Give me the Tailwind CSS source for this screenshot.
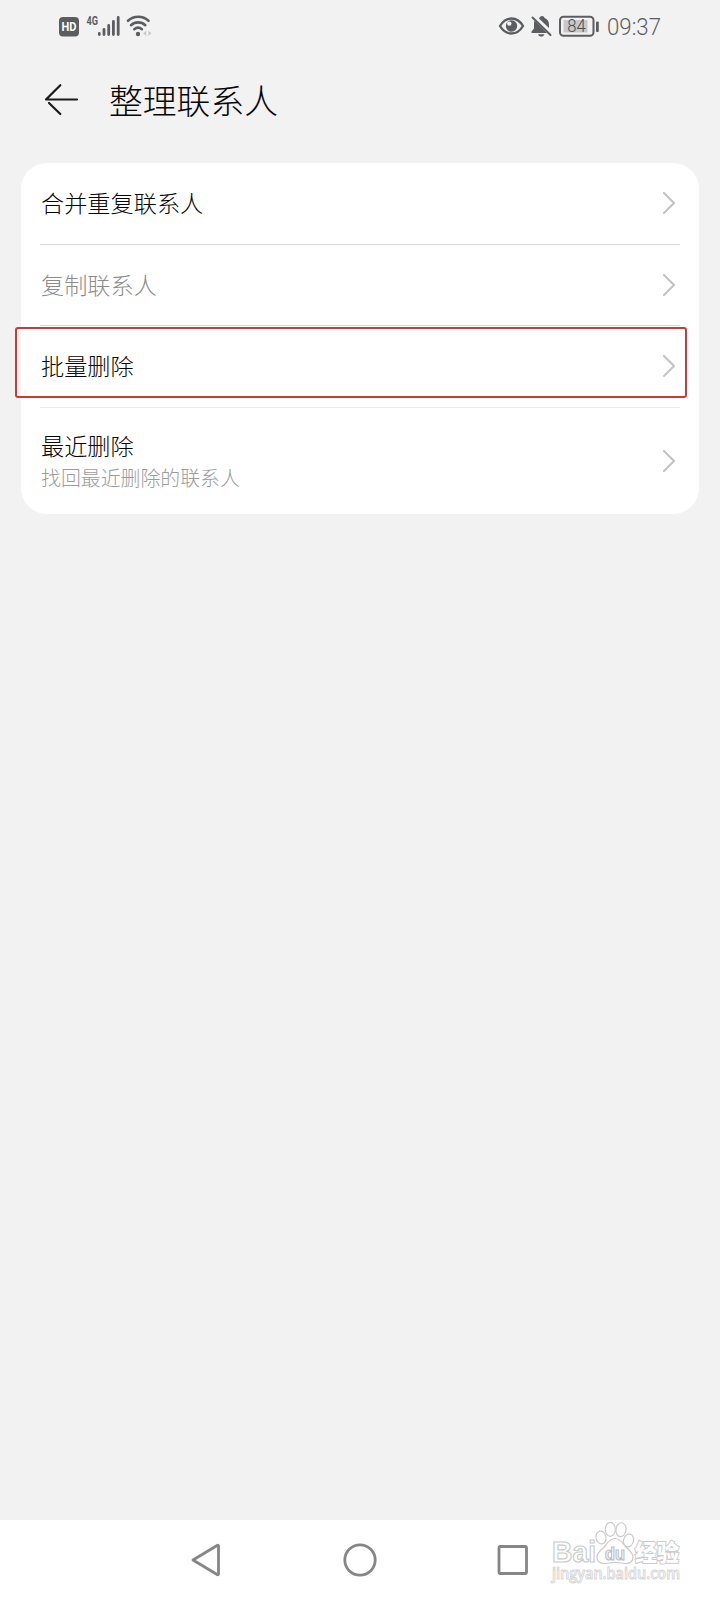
<!DOCTYPE html>
<html lang="zh-CN">
<head>
  <meta charset="UTF-8" />
  <meta name="viewport" content="width=device-width, initial-scale=1">
  <title>整理联系人</title>
  <script src="https://cdn.jsdelivr.net/npm/@tailwindcss/browser@4"></script>
</head>
<body class="bg-[#f2f2f3] font-['Noto_Sans_CJK_SC',sans-serif] font-light text-[#050505]">
  <div class="relative flex flex-col w-[720px] h-[1600px] overflow-hidden">

    <!-- status bar -->
    <header class="flex items-center justify-between h-[52px] pl-[58px] pr-[50px] text-[#5c5d60]">
      <svg width="94" height="52" viewBox="58 0 94 52" fill="none" stroke="#5c5d60">
        <rect x="59" y="17" width="20" height="19.500" rx="4" fill="#5c5d60" stroke="none" />
        <text x="69" y="31" text-anchor="middle" textLength="15" lengthAdjust="spacingAndGlyphs" font-family="Roboto, sans-serif" font-weight="700" font-size="12" fill="#fff" stroke="none">HD</text>
        <text x="86.500" y="25" textLength="11.500" lengthAdjust="spacingAndGlyphs" font-family="Roboto, sans-serif" font-weight="700" font-size="12.500" fill="#5c5d60" stroke="none">4G</text>
        <g stroke-width="2.800" stroke-linecap="round">
          <path d="M99.300 33.500v1M104 29.500v5M108.700 25.500v9M113.400 21.500v13M118.200 17.500v17" />
        </g>
        <g stroke-width="2.600" stroke-linecap="round">
          <path d="M128 20.800a15 15 0 0 1 20.500 0" />
          <path d="M131 25.200a10.500 10.500 0 0 1 14.300 0" />
          <path d="M134.300 29.200a6 6 0 0 1 7.600 0" />
        </g>
        <circle cx="138" cy="34" r="2.200" fill="#5c5d60" stroke="none" />
        <path d="M143 33.300l3.200-2.600v5.200zM151.500 33.300l-3.200-2.600v5.200z" fill="#c9c9cb" stroke="none" />
      </svg>
      <div class="flex items-center">
        <svg width="104" height="52" viewBox="497 0 104 52" fill="none" stroke="#5c5d60">
          <path d="M500 26c6-10 17-10 23 0c-6 10-17 10-23 0z" stroke-width="2.400" stroke-linejoin="round" />
          <circle cx="511.500" cy="26" r="5.700" fill="#5c5d60" stroke="none" />
          <circle cx="509.300" cy="23.600" r="2.200" fill="#f2f2f3" stroke="none" />
          <path d="M539 18.500c.6-1.600 1.700-2.500 3-2.500s2.300.9 2.600 2c2.800 1 4.400 3.400 4.400 6.500v3.500zM534.500 20.500L547 33h-15.500v-1.500l2.500-3v-4.500c0-1.300.1-2.500.5-3.500zM538 34.200h6.500c-.7 1.500-1.700 2.300-3.200 2.300s-2.700-.8-3.300-2.300z" fill="#5c5d60" stroke="none" />
          <path d="M532.500 17.500L550.500 35" stroke-width="2" stroke-linecap="round" />
          <rect x="560" y="16.700" width="33.500" height="19" rx="3.500" stroke-width="2" />
          <rect x="563.500" y="20" width="24" height="12.500" fill="#c8c8ca" stroke="none" />
          <rect x="596" y="21.500" width="2.800" height="10.500" rx="1" fill="#5c5d60" stroke="none" />
          <text x="576.500" y="32.200" text-anchor="middle" textLength="18.500" lengthAdjust="spacingAndGlyphs" font-family="Roboto, sans-serif" font-weight="300" font-size="17.500" fill="#4c4d50" stroke="none">84</text>
        </svg>
        <svg width="69" height="52" viewBox="601 0 69 52">
          <text x="607" y="35.300" textLength="54" lengthAdjust="spacingAndGlyphs" font-family="Roboto, sans-serif" font-weight="300" font-size="24" fill="#5c5d60">09:37</text>
        </svg>
      </div>
    </header>

    <!-- title -->
    <div class="flex items-center gap-[29px] h-[96px] pl-11">
      <svg class="shrink-0" width="36" height="34" viewBox="0 0 36 34" fill="none" stroke="#1a1a1a" stroke-width="2.200" stroke-linecap="round" stroke-linejoin="round">
        <path d="M33 16.500H2L16.300 2.200M5 20L16.300 31" />
      </svg>
      <h1 class="text-[33.800px] leading-[48px] whitespace-nowrap">整理联系人</h1>
    </div>

    <!-- list -->
    <main class="mt-[15px] mx-[21px] h-[351px] px-[19px] rounded-[26px] bg-white text-[23.2px]">
      <div class="flex items-center justify-between h-[82px] pl-px pr-1 pb-0.5 border-b border-[#d8d8d9]">
        <span>合并重复联系人</span>
        <svg width="14" height="24" viewBox="0 0 14 24" fill="none" stroke="#c4c4c5" stroke-width="2.200" stroke-linecap="round" stroke-linejoin="round"><path d="M2 2l10 10L2 22" /></svg>
      </div>
      <div class="flex items-center justify-between h-[81px] pl-px pr-1 pb-px border-b border-[#d8d8d9]">
        <span class="text-[#8c8c8d]">复制联系人</span>
        <svg width="14" height="24" viewBox="0 0 14 24" fill="none" stroke="#c4c4c5" stroke-width="2.200" stroke-linecap="round" stroke-linejoin="round"><path d="M2 2l10 10L2 22" /></svg>
      </div>
      <div class="flex items-center justify-between h-[82px] pl-px pr-1 pb-0.5 border-b border-[#ececed]">
        <span>批量删除</span>
        <svg width="14" height="24" viewBox="0 0 14 24" fill="none" stroke="#c4c4c5" stroke-width="2.200" stroke-linecap="round" stroke-linejoin="round"><path d="M2 2l10 10L2 22" /></svg>
      </div>
      <div class="flex items-center justify-between h-[106px] pl-px pr-1">
        <div class="pt-0.5">
          <p class="leading-8">最近删除</p>
          <p class="text-[19.900px] leading-[34px] text-[#9c9c9d]">找回最近删除的联系人</p>
        </div>
        <svg width="14" height="24" viewBox="0 0 14 24" fill="none" stroke="#c4c4c5" stroke-width="2.200" stroke-linecap="round" stroke-linejoin="round"><path d="M2 2l10 10L2 22" /></svg>
      </div>
    </main>

    <!-- highlight over the third row -->
    <div class="absolute left-[15px] top-[327px] w-[672px] h-[71px] border-2 border-[#cb3a37] rounded-[3px]"></div>

    <!-- navigation bar -->
    <nav class="mt-auto flex items-center h-20 pl-[190px] bg-white">
      <svg width="340" height="80" viewBox="190 1520 340 80" fill="none" stroke="#868686" stroke-width="2.800" stroke-linejoin="round">
        <path d="M193 1560L217.500 1545.300Q218.500 1545 218.500 1546V1574Q218.500 1575 217.500 1574.700Z" />
        <circle cx="360" cy="1560" r="15.200" />
        <rect x="499" y="1546.500" width="27.500" height="27" rx="1.500" />
      </svg>
    </nav>

    <!-- watermark -->
    <svg class="absolute left-[545px] top-[1515px] overflow-visible" width="145" height="75" viewBox="545 1515 145 75" fill="#fff" stroke="#cbcbcb" stroke-width="1.200">
      <g font-family="'Liberation Sans', sans-serif" font-weight="700">
        <text x="552" y="1562" textLength="44" lengthAdjust="spacingAndGlyphs" font-size="30">Bai</text>
        <ellipse cx="601" cy="1537.500" rx="5" ry="6.500" transform="rotate(-10 601 1537.500)" />
        <ellipse cx="610.300" cy="1529.300" rx="5" ry="7" />
        <ellipse cx="621" cy="1529.700" rx="5" ry="7" transform="rotate(8 621 1529.700)" />
        <ellipse cx="628.500" cy="1540.500" rx="5" ry="6.500" transform="rotate(14 628.500 1540.500)" />
        <path d="M615 1538.500c5.500 0 7.500 4.500 10.500 8s7.500 6 7.500 10.500c0 5-4 7-8.500 6.500c-3-.3-6-1.200-9.500-1.200s-6.500.9-9.500 1.200c-4.500.5-8.500-1.500-8.500-6.500c0-4.500 4.500-7 7.500-10.500s5-8 10.500-8z" />
        <text x="605" y="1560" textLength="20" lengthAdjust="spacingAndGlyphs" font-size="18" stroke="#bdbdbd">du</text>
      </g>
      <text x="552" y="1578.500" textLength="128" lengthAdjust="spacingAndGlyphs" font-family="'Open Sans', sans-serif" font-weight="600" font-size="16" stroke="#d6d6d6" stroke-width="1">jingyan.baidu.com</text>
      <text x="635" y="1561" textLength="44" lengthAdjust="spacingAndGlyphs" font-family="'Noto Sans CJK SC', sans-serif" font-weight="900" font-size="23" paint-order="stroke" stroke-width="2">经验</text>
    </svg>
  </div>
</body>
</html>
